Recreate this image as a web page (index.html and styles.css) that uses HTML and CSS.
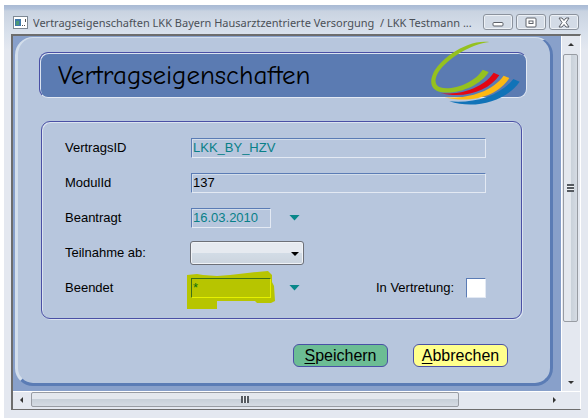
FILE: index.html
```html
<!DOCTYPE html>
<html lang="de">
<head>
  <meta charset="UTF-8" />
  <meta name="viewport" content="width=device-width, initial-scale=1.0" />
  <title>Vertragseigenschaften</title>
  <link rel="stylesheet" href="styles.css">
</head>
<body>
  <div class="window">
    <div class="titlebar">
      <svg class="app-icon" width="15" height="13" viewBox="0 0 15 13">
        <rect x="0.5" y="0.5" width="14" height="12" fill="#fff" stroke="#7d8894" />
        <rect x="2" y="3" width="6" height="7" fill="#3f78a8" />
        <rect x="3" y="5" width="3" height="4" fill="#4b9a76" />
        <path d="M9 9.500h1M11 9.500h1M12.500 3v3" stroke="#555" />
      </svg>
      <span class="caption">Vertragseigenschaften LKK Bayern Hausarztzentrierte Versorgung&nbsp; / LKK Testmann ...</span>
      <div class="window-btns">
        <button type="button" aria-label="Minimieren">
          <svg width="12" height="11" viewBox="0 0 12 11"><rect x="1" y="5.500" width="10" height="3.500" rx="1" fill="#fff" stroke="#5c6068" /></svg>
        </button>
        <button type="button" aria-label="Maximieren">
          <svg width="12" height="11" viewBox="0 0 12 11"><rect x="1" y="1" width="10" height="9" rx="1" fill="#fff" stroke="#5c6068" /><rect x="4" y="4" width="4" height="2.500" fill="#fff" stroke="#5c6068" /></svg>
        </button>
        <button type="button" aria-label="Schließen">
          <svg width="12" height="11" viewBox="0 0 12 11"><path d="M1 1h3l2 2.500L8 1h3L8 5.500 11 10H8L6 7.500 4 10H1l3-4.500z" fill="#fff" stroke="#5c6068" /></svg>
        </button>
      </div>
    </div>

    <div class="client">
      <div class="view">
        <form class="panel">
          <header class="banner">
            <h1>Vertragseigenschaften</h1>
            <svg class="logo" width="92" height="67" viewBox="30 15 276 201">
              <path d="M208 21C155 26 82 70 55 112C43 132 43 149 60 157C94 168 163 145 188 104L206 111C183 149 120 178 66 172C34 168 28 144 38 119C55 75 139 12 208 21Z" fill="#95c11f" />
              <path d="M61 175C120 180 189 160 221 113L238 121C207 166 141 192 61 175Z" fill="#e30613" />
              <path d="M73 187C140 192 215 172 251 122L268 129C235 182 155 207 73 187Z" fill="#fdb913" />
              <path d="M88 199C160 206 238 184 280 132L299 140C257 200 164 224 88 199Z" fill="#1173b8" />
            </svg>
          </header>

          <div class="fields">
            <div class="row">
              <label for="vertragsId">VertragsID</label>
              <input type="text" id="vertragsId" class="field teal" value="LKK_BY_HZV" />
            </div>
            <div class="row">
              <label for="modulId">ModulId</label>
              <input type="text" id="modulId" class="field" value="137" />
            </div>
            <div class="row">
              <label for="beantragt">Beantragt</label>
              <input type="text" id="beantragt" class="field date teal" value="16.03.2010" />
              <button type="button" class="drop" aria-label="Datum wählen"></button>
            </div>
            <div class="row">
              <label for="teilnahme">Teilnahme ab:</label>
              <div class="select-wrap">
                <select id="teilnahme"><option></option></select>
              </div>
            </div>
            <div class="row">
              <label for="beendet">Beendet</label>
              <div class="marked">
                <svg class="marker" width="88" height="39" viewBox="0 0 88 39">
                  <path d="M0 4L10 3 16 4 30 5 43 4 70 1 81 0 85 4V11L87 15 88 30 84 32H70L68 30H50L30 30V38H0Z" fill="#b7c500" />
                </svg>
                <input type="text" id="beendet" class="field date" value="*" />
              </div>
              <button type="button" class="drop" aria-label="Datum wählen"></button>
              <label class="vertretung" for="vertretung">In Vertretung:</label>
              <input type="checkbox" id="vertretung" />
            </div>
          </div>

          <div class="btns">
            <button type="button" class="save"><u>S</u>peichern</button>
            <button type="button" class="cancel"><u>A</u>bbrechen</button>
          </div>
        </form>
      </div>

      <div class="scroll vertical">
        <span class="arrow up"></span>
        <div class="track"><div class="thumb"><span class="grip"></span></div></div>
        <span class="arrow down"></span>
      </div>
      <div class="scroll horizontal">
        <span class="arrow left"></span>
        <div class="track"><div class="thumb"><span class="grip"></span></div></div>
        <span class="arrow right"></span>
      </div>
    </div>
  </div>
</body>
</html>
```
FILE: styles.css
```css
* {
  box-sizing: border-box;
}
body {
  margin: 0;
  background: #fff;
  color: #000;
  font-family: 'Liberation Sans', Arial, sans-serif;
  font-size: 13px;
}
.window {
  display: flex;
  flex-direction: column;
  min-height: 100vh;
  padding: 5px 7px 9px;
  border-left: 4px solid #fff;
  background: linear-gradient(#fff 5px, #a9bad3 5px, #b4c4dc 9px, #c9d3e1 11px, #d9e1ec 34px, #e4e8f0 50px);
}

/* title bar */
.titlebar {
  display: flex;
  align-items: center;
  height: 29px;
  padding: 5px 2px 0 2px;
}
.app-icon {
  flex: none;
}
.caption {
  flex: 1;
  min-width: 0;
  margin-left: 5px;
  overflow: hidden;
  white-space: nowrap;
  color: #4b5057;
  font-family: 'Noto Sans', 'Open Sans', sans-serif;
  font-size: 11px;
}
.window-btns {
  display: flex;
  gap: 3px;
}
.window-btns button {
  display: flex;
  align-items: center;
  justify-content: center;
  width: 30px;
  height: 16px;
  padding: 0;
  border: 1px solid #8b929d;
  border-radius: 3px;
  background: #d3dbe6;
  box-shadow: inset 0 0 0 1px #edf1f6;
}

/* scrollable area */
.client {
  flex: 1;
  display: grid;
  grid-template-columns: 1fr 19px;
  grid-template-rows: 1fr 18px;
  border: 1px solid #6d6d6d;
  border-right-color: #fff;
  border-top-width: 2px;
  border-left-width: 2px;
  background: #e4e8f0;
}
.view {
  display: flex;
  padding: 1px 8px 5px 2px;
  background: #88a0ca;
}
.panel {
  flex: 1;
  min-width: 0;
  padding: 14px 23px 0 21px;
  border: 3px solid #5b7cb5;
  border-top: 1px solid #d3deeb;
  border-left-color: #d3deeb;
  border-radius: 18px;
  background: #b7c6dd;
}
.banner {
  position: relative;
  display: flex;
  align-items: center;
  height: 46px;
  padding-left: 18px;
  border: 1px solid #4a50a5;
  border-right-color: #e3e9f3;
  border-bottom-color: #e3e9f3;
  border-radius: 9px;
  background: #5b7bb2;
  box-shadow: inset 1px 1px 0 #dbe3f0;
}
.banner h1 {
  margin: 0;
  font-family: 'Comic Sans MS', 'Comic Neue', 'Open Sans', sans-serif;
  font-size: 27px;
  font-weight: normal;
  font-variant-ligatures: none;
}
.logo {
  position: absolute;
  top: -13px;
  right: 4px;
}

/* form */
.fields {
  margin: 23px 5px 0 2px;
  padding: 8px 35px 13px 23px;
  border: 1px solid #4a50a5;
  border-radius: 9px;
  box-shadow: 1px 1px 0 #dbe3f0, inset 1px 1px 0 #dbe3f0;
}
.row {
  display: flex;
  align-items: center;
  height: 35px;
}
.row label:first-child {
  width: 126px;
}
.field {
  flex: 1;
  min-width: 0;
  height: 20px;
  padding: 0 1px;
  border: 1px solid #5b7cb5;
  border-right-color: #e3e9f3;
  border-bottom-color: #e3e9f3;
  background: transparent;
  box-shadow: inset 1px 1px 0 #d3deeb;
  color: #000;
  font: 13px 'Liberation Sans', Arial, sans-serif;
}
.field.date {
  flex: none;
  width: 80px;
}
.teal {
  color: #088088;
}
.drop {
  width: 11px;
  height: 6px;
  margin-left: 18px;
  padding: 0;
  border: none;
  background: #08878a;
  clip-path: polygon(0 0, 100% 0, 50% 100%);
}
.select-wrap {
  position: relative;
  margin-left: -1px;
}
.select-wrap::after {
  content: '';
  position: absolute;
  top: 11px;
  right: 5px;
  border: 4px solid transparent;
  border-top-color: #000;
  border-bottom: none;
  pointer-events: none;
}
select {
  display: block;
  width: 114px;
  height: 24px;
  appearance: none;
  border: 1px solid #6d7078;
  border-radius: 3px;
  background: linear-gradient(#e6eaf0 50%, #d2dce6 50%, #ccd4de);
  box-shadow: inset 0 0 0 1px #f0f3f7;
}
.marked {
  position: relative;
  display: flex;
}
.marker {
  position: absolute;
  top: -7px;
  left: -4px;
}
.marked .field {
  position: relative;
  border-color: #3d7018 #e6f000 #e6f000 #3d7018;
  box-shadow: none;
  color: #087010;
}
.vertretung {
  margin-left: auto;
}
input[type="checkbox"] {
  width: 20px;
  height: 20px;
  margin: 0 0 0 12px;
  appearance: none;
  border: 1px solid #5b7cb5;
  border-right-color: #e3e9f3;
  border-bottom-color: #e3e9f3;
  background: #fff;
}
.btns {
  display: flex;
  justify-content: flex-end;
  gap: 25px;
  margin: 25px 19px 16px 0;
}
.btns button {
  width: 95px;
  height: 23px;
  padding: 0;
  border: 1px solid #4a50a5;
  border-radius: 6px;
  color: #000;
  font: 16px 'Liberation Sans', Arial, sans-serif;
}
.btns u {
  text-underline-offset: 2px;
}
.btns .save {
  background: #6cbd94;
}
.btns .cancel {
  background: #ffff8c;
}

/* scrollbars */
.scroll {
  display: flex;
  align-items: center;
  background: #e4e8f0;
}
.vertical {
  flex-direction: column;
  padding: 0 2px 0 1px;
  border-left: 1px solid #fff;
}
.horizontal {
  grid-column: 1 / -1;
  padding: 0 19px 2px 0;
  border-top: 1px solid #fff;
}
.track {
  flex: 1;
  display: flex;
  align-self: stretch;
}
.vertical .track {
  flex-direction: column;
}
.thumb {
  display: flex;
  align-items: center;
  justify-content: center;
  border: 1px solid #989ca3;
  border-radius: 2px;
  background: linear-gradient(#e4e8ee 50%, #c8d0d9 50%, #d5dbe3);
}
.vertical .thumb {
  height: 84%;
  background: linear-gradient(90deg, #e4e8ee 50%, #c8d0d9 50%, #d5dbe3);
}
.horizontal .thumb {
  width: 83%;
}
.grip {
  width: 8px;
  height: 7px;
  background: repeating-linear-gradient(90deg, #555a60 0, #555a60 2px, #f0f3f6 2px, #f0f3f6 3px);
}
.vertical .grip {
  width: 7px;
  height: 8px;
  background: repeating-linear-gradient(#555a60 0, #555a60 2px, #f0f3f6 2px, #f0f3f6 3px);
}
.arrow {
  border: 3px solid transparent;
}
.up {
  margin: 4px 0 8px;
  border-bottom-color: #333;
}
.down {
  margin: 8px 0 4px;
  border-top-color: #333;
}
.left {
  margin: 0 8px 0 4px;
  border-right-color: #333;
}
.right {
  margin: 0 2px 0 6px;
  border-left-color: #333;
}
```
